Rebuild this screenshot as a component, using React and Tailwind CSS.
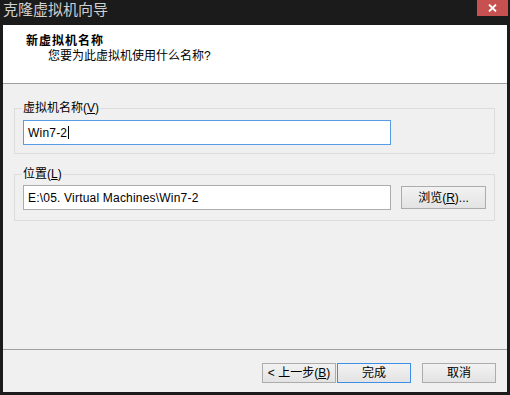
import React from "react";

const font = {
  fontFamily: '"Liberation Sans", "Noto Sans CJK SC", sans-serif',
};

const GroupBox = ({ label, mnemonic, className, children }) => (
  <div className={`relative border border-[#dcdcdc] ${className}`}>
    <span className="absolute left-[7px] top-[-9px] px-px bg-[#f0f0f0] text-[12px] leading-[16px] text-black">
      {label}(<u>{mnemonic}</u>)
    </span>
    {children}
  </div>
);

const Button = ({ children, primary }) => (
  <button
    className={`w-[74px] h-[20px] flex items-center justify-center text-[12px] leading-none text-black bg-gradient-to-b from-[#f2f2f2] to-[#e3e3e3] border ${
      primary ? "border-[#3c8ee6]" : "border-[#acacac]"
    }`}
  >
    {children}
  </button>
);

export default function App() {
  return (
    <div
      className="w-[510px] h-[395px] bg-[#1b1b1b] flex flex-col"
      style={font}
    >
      <div className="h-[25px] shrink-0 flex items-start justify-between pl-[3px] pr-[2px]">
        <span className="text-[15px] leading-[20px] text-[#cfcfcf]">
          克隆虚拟机向导
        </span>
        <div className="w-[31px] h-[16px] bg-[#c75050] flex items-center justify-center">
          <svg width="9" height="8" viewBox="0 0 9 8">
            <path d="M1 0.5L8 7.5M8 0.5L1 7.5" stroke="#fff" strokeWidth="1.8" />
          </svg>
        </div>
      </div>

      <div className="ml-[3px] w-[504px] h-[367px] bg-[#f0f0f0] flex flex-col">
        <div className="h-[59px] shrink-0 bg-white border-b border-[#a0a0a0] pl-[23px] pt-[8px] text-[12px] leading-[16px] text-black">
          <div className="font-bold tracking-[1px]">新虚拟机名称</div>
          <div className="pl-[22px] -mt-px">您要为此虚拟机使用什么名称?</div>
        </div>

        <div className="flex-1 pl-[11px] pr-[12px] pt-[24px]">
          <GroupBox label="虚拟机名称" mnemonic="V" className="h-[46px] pt-[11px] pl-[8px]">
            <div className="w-[368px] h-[25px] border border-[#569de5] bg-white pl-[4px] flex items-center text-[12px] tracking-[0.2px] text-black">
              Win7-2
              <span className="ml-px w-px h-[13px] bg-black" />
            </div>
          </GroupBox>

          <GroupBox label="位置" mnemonic="L" className="mt-[20px] h-[47px] pt-[10px] pl-[8px] flex items-start">
            <div className="w-[368px] h-[25px] border border-[#acacac] bg-white pl-[4px] flex items-center text-[12px] tracking-[0.2px] text-black">
              E:\05. Virtual Machines\Win7-2
            </div>
            <button className="ml-[10px] mt-px w-[85px] h-[23px] flex items-center justify-center text-[12px] text-black bg-gradient-to-b from-[#f2f2f2] to-[#e3e3e3] border border-[#acacac]">
              浏览(<u>R</u>)...
            </button>
          </GroupBox>
        </div>

        <div className="h-[43px] shrink-0 border-t border-[#a0a0a0] pt-[13px] pr-[11px] flex items-start justify-end">
          <Button>
            &lt; 上一步(<u>B</u>)
          </Button>
          <div className="ml-px">
            <Button primary>完成</Button>
          </div>
          <div className="ml-[11px]">
            <Button>取消</Button>
          </div>
        </div>
      </div>
    </div>
  );
}
